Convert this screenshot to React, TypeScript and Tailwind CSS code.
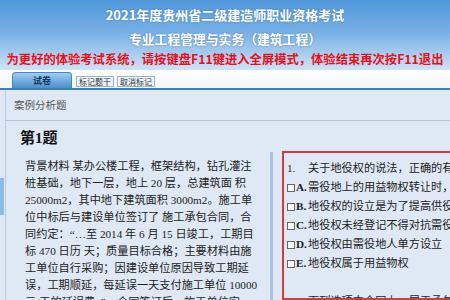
const SERIF = "font-['Liberation_Serif','Noto_Sans_CJK_SC',serif]";

const material = [
  '背景材料 某办公楼工程，框架结构，钻孔灌注',
  '桩基础，地下一层，地上 20 层，总建筑面 积',
  '25000m2，其中地下建筑面积 3000m2。施工单',
  '位中标后与建设单位签订了 施工承包合同，合',
  '同约定：“…至 2014 年 6 月 15 日竣工，工期目',
  '标 470 日历 天；质量目标合格；主要材料由施',
  '工单位自行采购；因建设单位原因导致工期延',
  '误，工期顺延，每延误一天支付施工单位 10000',
  '元/天的延误费。”，合同签订后，施工单位实',
];

const options = [
  { key: 'A', text: '需役地上的用益物权转让时，受让人同时享有地役权' },
  { key: 'B', text: '地役权的设立是为了提高供役地的效益' },
  { key: 'C', text: '地役权未经登记不得对抗需役地人' },
  { key: 'D', text: '地役权由需役地人单方设立' },
  { key: 'E', text: '地役权属于用益物权' },
];

export default function App() {
  return (
    <div className="w-[450px] h-[300px] overflow-hidden bg-[#dfe9f5] flex flex-col">
      {/* 顶部标题 */}
      <div className="h-[70px] shrink-0 bg-gradient-to-b from-[#4f97da] via-[#7db3e6] to-[#cfe2f5] flex flex-col items-center font-['Noto_Sans_CJK_SC',sans-serif] font-bold">
        <div className="mt-[6px] text-[13px] leading-[18px] text-white [text-shadow:0_0_2px_rgba(40,90,150,0.6)]">
          2021年度贵州省二级建造师职业资格考试
        </div>
        <div className="mt-[6px] text-[12.8px] leading-[18px] text-white [text-shadow:0_0_2px_rgba(40,90,150,0.6)]">
          专业工程管理与实务（建筑工程）
        </div>
        <div className="mt-[2px] text-[12.3px] leading-[18px] text-[#e8101a] whitespace-nowrap">
          为更好的体验考试系统，请按键盘F11键进入全屏模式，体验结束再次按F11退出
        </div>
      </div>

      {/* 标签栏 */}
      <div className="h-[20px] shrink-0 bg-gradient-to-b from-white to-[#f1f5f9] border-b-2 border-[#3f82ad] flex items-end pl-[12px] gap-[4px] font-['Noto_Sans_CJK_SC',sans-serif]">
        <div className="w-[60px] h-[16px] rounded-t-[4px] bg-gradient-to-b from-[#9fcdf0] to-[#4b90cc] border border-b-0 border-[#4a86bb] flex items-center justify-center text-[9px] font-bold text-[#17375e]">
          试卷
        </div>
        <div className="flex gap-[3px] mb-[1px]">
          <div className="h-[11px] px-[2px] border border-[#9fb3c8] bg-[#eef3f8] text-[8px] leading-[9px] text-[#333]">标记题干</div>
          <div className="h-[11px] px-[2px] border border-[#9fb3c8] bg-[#eef3f8] text-[8px] leading-[9px] text-[#333]">取消标记</div>
        </div>
      </div>

      <div className="flex flex-1 min-h-0">
        {/* 左侧边缘 */}
        <div className="w-[5px] shrink-0 pt-[88px]">
          <div className="w-[4px] h-[37px] bg-[#8ebbe6]" />
        </div>

        <div className="flex-1 border-l border-[#b9cbe0] flex flex-col">
          <div className="h-[31px] shrink-0 border-b border-[#b4c4d9] pl-[8px] pt-[8px] text-[10.5px] leading-[14px] text-[#555] font-['Noto_Sans_CJK_SC',sans-serif]">
            案例分析题
          </div>

          <div className={`pl-[14px] pt-[8px] text-[15px] leading-[18px] font-bold text-[#111] ${SERIF}`}>第1题</div>

          <div className="flex flex-1 min-h-0 mt-[4px]">
            <div className={`w-[264px] shrink-0 pl-[19px] pt-[7px] text-[11.2px] leading-[17px] text-[#222] ${SERIF}`}>
              {material.map((l, i) => (
                <div key={i} className="whitespace-nowrap">{l}</div>
              ))}
            </div>

            <div className="w-[3px] shrink-0 mt-[1px] bg-[#a9c2e3]" />

            <div className={`ml-[9px] w-[200px] shrink-0 border-2 border-[#d8383f] pl-[3px] pt-[6px] text-[11.2px] leading-[19px] text-[#222] whitespace-nowrap overflow-hidden ${SERIF}`}>
              <div className="flex">
                <span className="w-[21px] shrink-0">1.</span>
                <span>关于地役权的说法，正确的有（ ）</span>
              </div>
              {options.map(o => (
                <div key={o.key} className="flex items-center">
                  <span className="w-[8px] h-[8px] shrink-0 border border-[#666] bg-white mr-[1px]" />
                  <span className="w-[12px] shrink-0 font-bold">{o.key}.</span>
                  <span>{o.text}</span>
                </div>
              ))}
              <div className="h-[19px]" />
              <div className="flex">
                <span className="w-[21px] shrink-0">2.</span>
                <span>下列选项中合同上，属于承包人的</span>
              </div>
            </div>
          </div>
        </div>
      </div>
    </div>
  );
}
